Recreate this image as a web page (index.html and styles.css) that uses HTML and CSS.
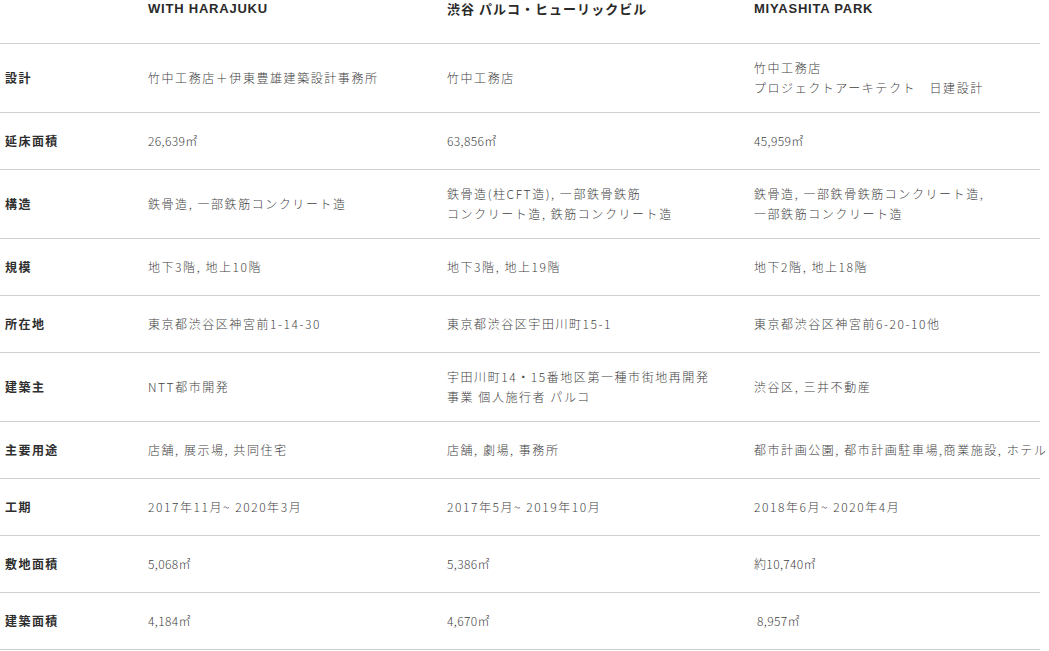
FILE: index.html
```html
<!DOCTYPE html>
<html lang="ja">
<head>
<meta charset="utf-8">
<title>施設概要</title>
<link rel="stylesheet" href="styles.css">
</head>
<body>
<table class="spec">
  <colgroup>
    <col class="c-label">
    <col class="c-a">
    <col class="c-b">
    <col class="c-c">
  </colgroup>
  <thead>
    <tr>
      <th class="blank"></th>
      <th class="name latin">WITH HARAJUKU</th>
      <th class="name">渋谷 パルコ・ヒューリックビル</th>
      <th class="name latin">MIYASHITA PARK</th>
    </tr>
  </thead>
  <tbody>
    <tr>
      <th>設計</th>
      <td>竹中工務店＋伊東豊雄建築設計事務所</td>
      <td>竹中工務店</td>
      <td>竹中工務店<br>プロジェクトアーキテクト　日建設計</td>
    </tr>
    <tr>
      <th>延床面積</th>
      <td class="num">26,639㎡</td>
      <td class="num">63,856㎡</td>
      <td class="num">45,959㎡</td>
    </tr>
    <tr>
      <th>構造</th>
      <td>鉄骨造, 一部鉄筋コンクリート造</td>
      <td>鉄骨造(柱CFT造), 一部鉄骨鉄筋<br>コンクリート造, 鉄筋コンクリート造</td>
      <td>鉄骨造, 一部鉄骨鉄筋コンクリート造,<br>一部鉄筋コンクリート造</td>
    </tr>
    <tr>
      <th>規模</th>
      <td>地下3階, 地上10階</td>
      <td>地下3階, 地上19階</td>
      <td>地下2階, 地上18階</td>
    </tr>
    <tr>
      <th>所在地</th>
      <td>東京都渋谷区神宮前1-14-30</td>
      <td>東京都渋谷区宇田川町15-1</td>
      <td>東京都渋谷区神宮前6-20-10他</td>
    </tr>
    <tr>
      <th>建築主</th>
      <td>NTT都市開発</td>
      <td>宇田川町14・15番地区第一種市街地再開発<br>事業 個人施行者 パルコ</td>
      <td>渋谷区, 三井不動産</td>
    </tr>
    <tr>
      <th>主要用途</th>
      <td>店舗, 展示場, 共同住宅</td>
      <td>店舗, 劇場, 事務所</td>
      <td class="nowrap">都市計画公園, 都市計画駐車場,商業施設, ホテル</td>
    </tr>
    <tr>
      <th>工期</th>
      <td>2017年11月~ 2020年3月</td>
      <td>2017年5月~ 2019年10月</td>
      <td>2018年6月~ 2020年4月</td>
    </tr>
    <tr>
      <th>敷地面積</th>
      <td class="num">5,068㎡</td>
      <td class="num">5,386㎡</td>
      <td class="num">約10,740㎡</td>
    </tr>
    <tr>
      <th>建築面積</th>
      <td class="num">4,184㎡</td>
      <td class="num">4,670㎡</td>
      <td class="num">&nbsp;8,957㎡</td>
    </tr>
  </tbody>
</table>
</body>
</html>
```
FILE: styles.css
```css
html, body {
  margin: 0;
  padding: 0;
  background: #ffffff;
}

body {
  font-family: "Noto Sans CJK JP", "Noto Sans", sans-serif;
  color: #3a3a3a;
  overflow: hidden;
}

.spec {
  width: 1040px;
  border-collapse: collapse;
  table-layout: fixed;
}

.c-label { width: 148px; }
.c-a { width: 299px; }
.c-b { width: 307px; }
.c-c { width: 286px; }

.spec tr {
  border-bottom: 1px solid #cfcfcf;
}

.spec thead th {
  height: 43px;
  box-sizing: border-box;
  padding: 1px 0 0;
  vertical-align: top;
  text-align: left;
  font-size: 13px;
  line-height: 16px;
  font-weight: 700;
  color: #2a2a2a;
  letter-spacing: 0.08em;
  white-space: nowrap;
}

.spec thead th.latin {
  font-family: "Liberation Sans", Arial, sans-serif;
  letter-spacing: 0.06em;
}

.spec tbody th,
.spec tbody td {
  height: 57px;
  box-sizing: border-box;
  padding: 14px 0;
  vertical-align: middle;
  text-align: left;
  font-size: 12px;
  line-height: 20px;
  letter-spacing: 0.13em;
}

.spec tbody th {
  padding-left: 5px;
  font-weight: 700;
  color: #2e2e2e;
  letter-spacing: 0.12em;
}

.spec tbody td {
  font-weight: 300;
  color: #3f3f3f;
}

.spec tbody td.num {
  letter-spacing: 0.03em;
}

.spec td.nowrap {
  white-space: nowrap;
}
```
